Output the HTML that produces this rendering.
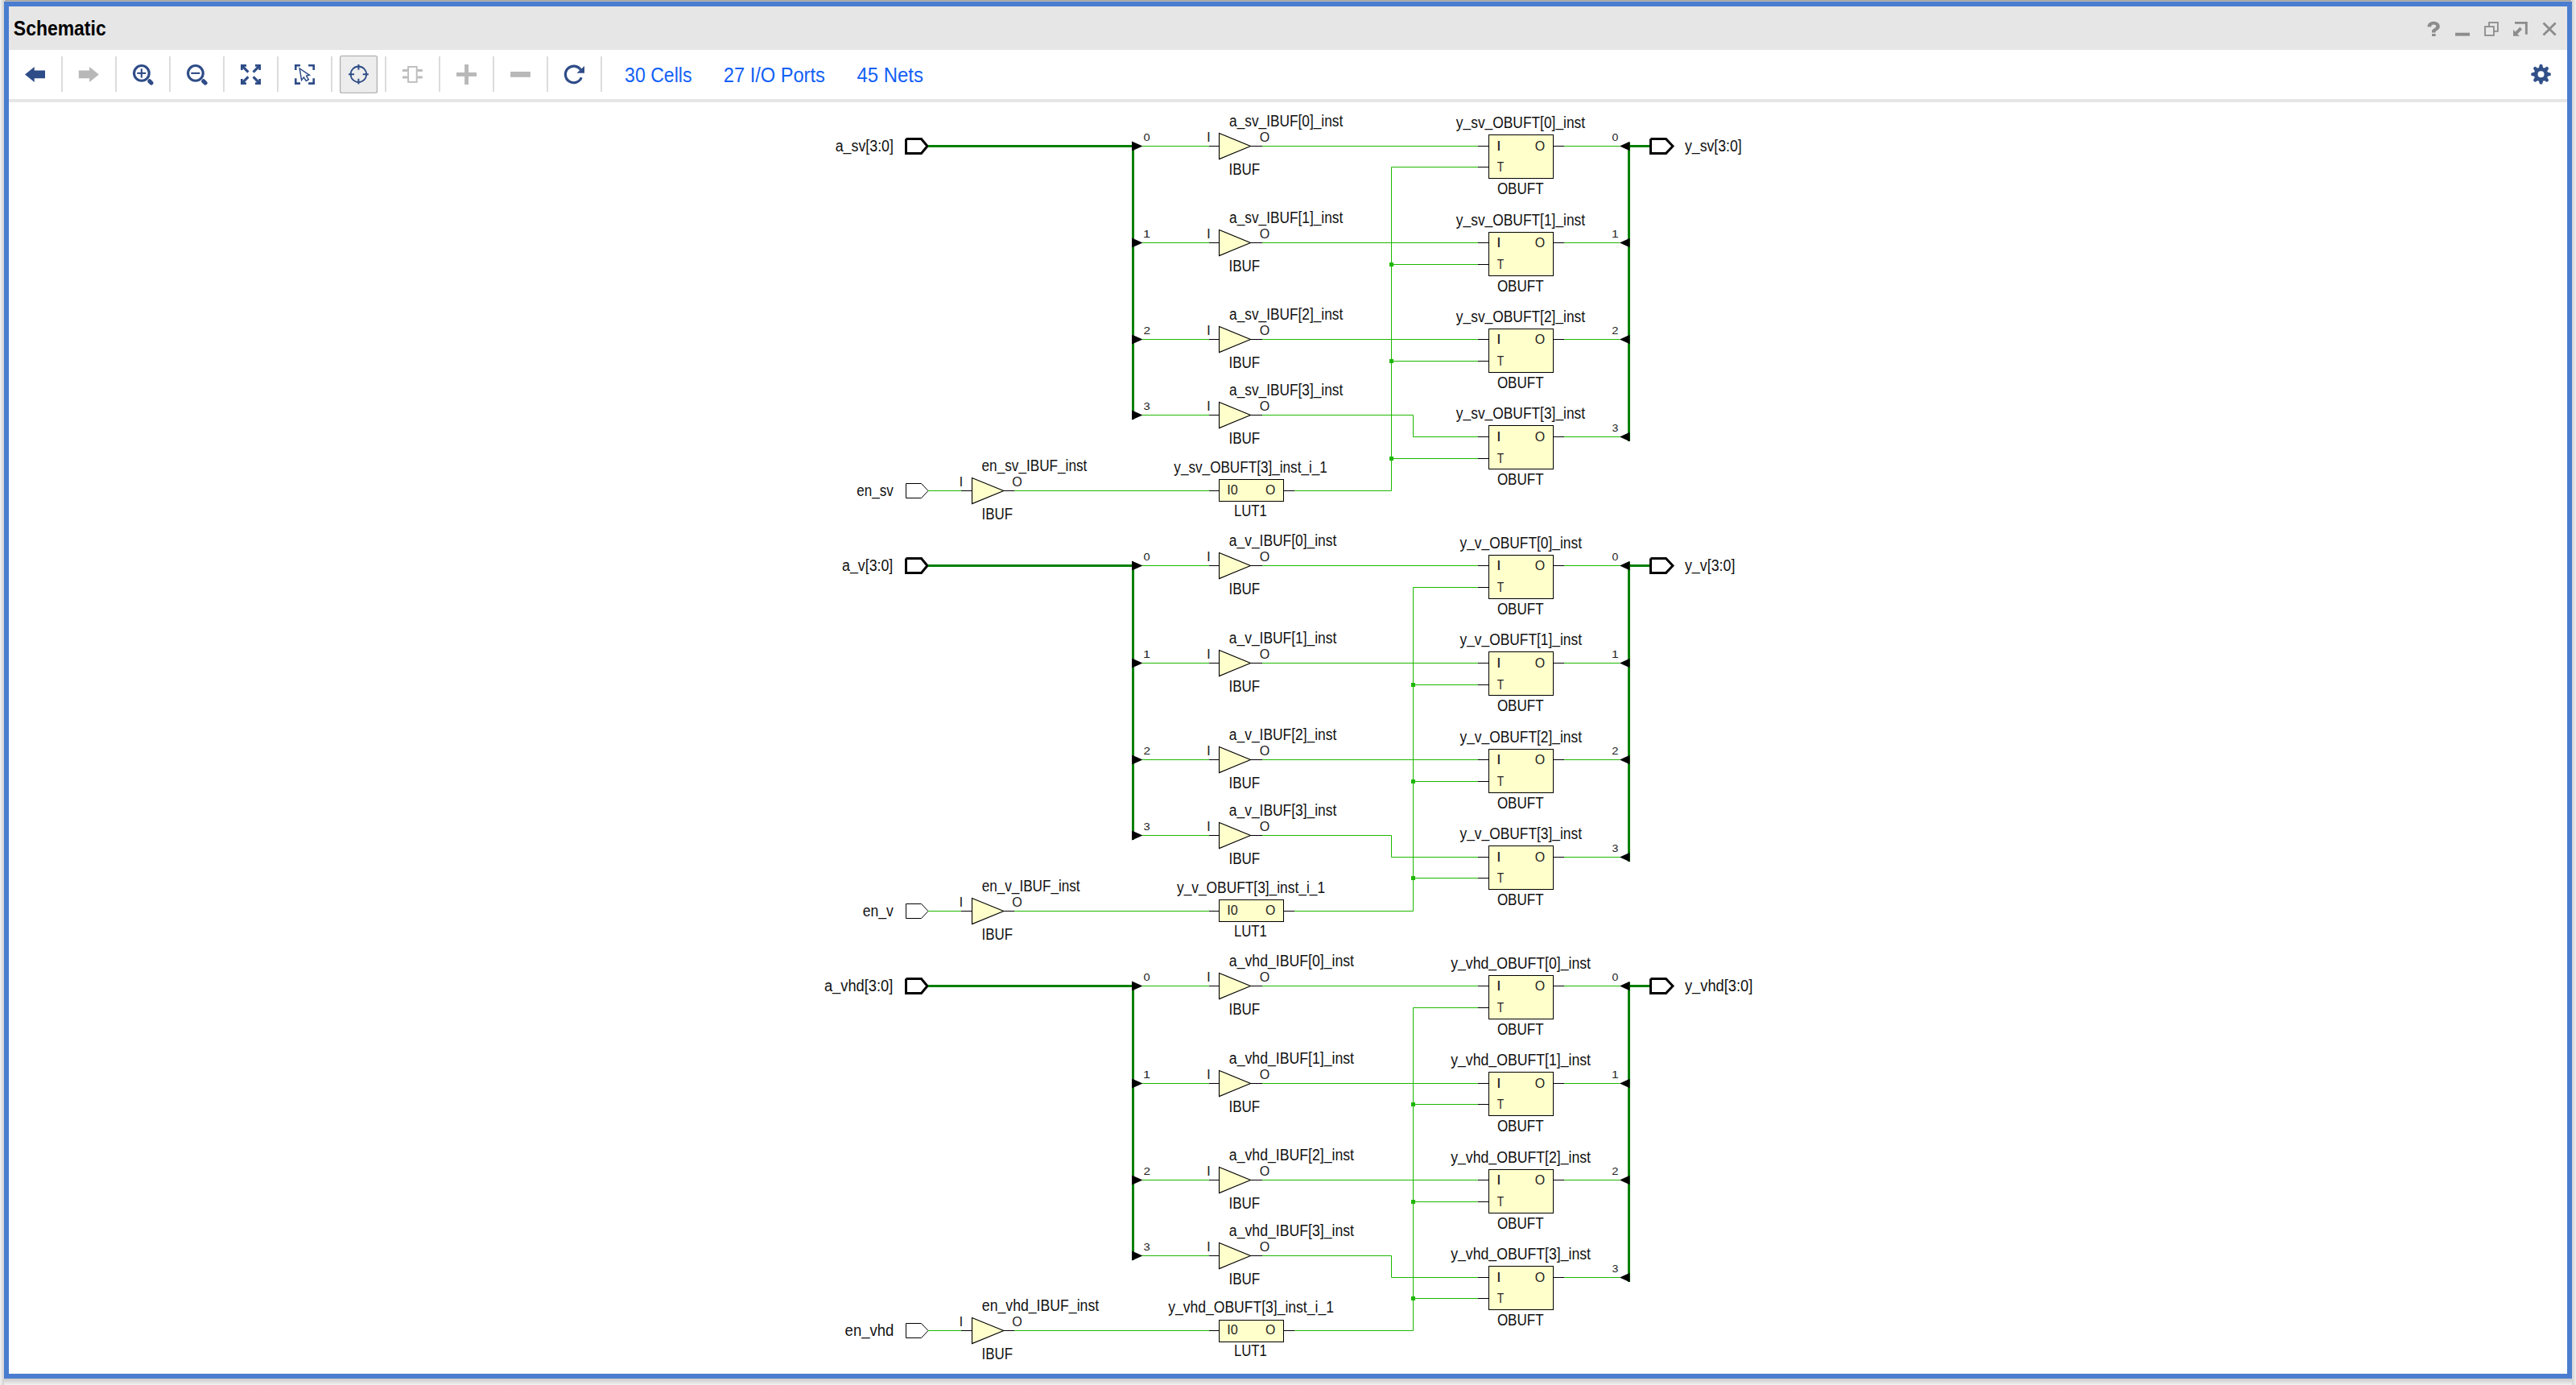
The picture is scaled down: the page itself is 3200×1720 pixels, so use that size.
<!DOCTYPE html><html><head><meta charset="utf-8"><title>Schematic</title><style>html,body{margin:0;padding:0;width:3200px;height:1720px;overflow:hidden;background:#f3f3f3}svg{display:block}text{font-family:"Liberation Sans",sans-serif}</style></head><body>
<svg width="3200" height="1720" viewBox="0 0 3200 1720">
<defs><linearGradient id="shb" x1="0" y1="0" x2="0" y2="1"><stop offset="0" stop-color="#c9c9c9"/><stop offset="1" stop-color="#f3f3f3"/></linearGradient><linearGradient id="shl" x1="1" y1="0" x2="0" y2="0"><stop offset="0" stop-color="#cfcfcf"/><stop offset="1" stop-color="#f3f3f3"/></linearGradient><linearGradient id="shr" x1="0" y1="0" x2="1" y2="0"><stop offset="0" stop-color="#d2d2d2"/><stop offset="1" stop-color="#efefef"/></linearGradient><linearGradient id="sht" x1="0" y1="1" x2="0" y2="0"><stop offset="0" stop-color="#bdbdbd"/><stop offset="1" stop-color="#e9e9e9"/></linearGradient></defs>
<rect x="5" y="1712" width="3192" height="8" fill="url(#shb)"/>
<rect x="0" y="0" width="5" height="1720" fill="url(#shl)"/>
<rect x="3195" y="0" width="5" height="1720" fill="url(#shr)"/>
<rect x="6" y="0" width="3188" height="1" fill="#a3a3a3"/><rect x="5" y="1" width="3190" height="1" fill="#bdbcb7"/>
<rect x="5" y="2" width="3190" height="1710" fill="#4a7dcf"/>
<rect x="11" y="8" width="3178" height="1698" fill="#ffffff"/>
<rect x="11" y="8" width="3178" height="54" fill="#e6e6e6"/>
<rect x="11" y="123" width="3178" height="4" fill="#e6e6e6"/>
<text x="16.84" y="44.20" font-size="26" font-weight="bold" fill="#000" textLength="114.83" lengthAdjust="spacingAndGlyphs">Schematic</text>
<path d="M3015.5,33.2 C3015.5,29 3018.8,26.8 3023,26.8 C3027.6,26.8 3030.8,29.2 3030.8,33 C3030.8,36.6 3027.2,37.6 3025.6,39.2 L3025.6,40.6 L3021,40.6 L3021,38.6 C3021,36 3026.2,35 3026.2,32.8 C3026.2,31.4 3025,30.6 3023.2,30.6 C3021.3,30.6 3020.1,31.6 3020.1,33.4 Z" fill="#8c8c8c"/>
<rect x="3021" y="42" width="4.6" height="3" fill="#8c8c8c"/>
<rect x="3050" y="40.7" width="18" height="3.9" fill="#8c8c8c"/>
<rect x="3092" y="28" width="10.9" height="10.8" fill="none" stroke="#8c8c8c" stroke-width="1.8"/>
<rect x="3087" y="33.1" width="10.9" height="10.8" fill="#e8e8e8" stroke="#8c8c8c" stroke-width="1.8"/>
<path d="M3124,27.1 H3139.8 V42.8 H3136.9 V29.8 H3124 Z" fill="#8c8c8c"/>
<path d="M3122,36.8 L3124.6,39.4 L3130.4,33.6 L3133,36.4 L3127.2,42.2 L3130,44.8 L3122,44.8 Z" fill="#8c8c8c"/>
<path d="M3159.5,28.5 L3174.6,43.6 M3174.6,28.5 L3159.5,43.6" stroke="#8c8c8c" stroke-width="2.8"/>
<rect x="76.15" y="70" width="1.7" height="44" fill="#d6d6d6"/>
<rect x="143.15" y="70" width="1.7" height="44" fill="#d6d6d6"/>
<rect x="210.15" y="70" width="1.7" height="44" fill="#d6d6d6"/>
<rect x="277.15" y="70" width="1.7" height="44" fill="#d6d6d6"/>
<rect x="344.15" y="70" width="1.7" height="44" fill="#d6d6d6"/>
<rect x="411.15" y="70" width="1.7" height="44" fill="#d6d6d6"/>
<rect x="478.15" y="70" width="1.7" height="44" fill="#d6d6d6"/>
<rect x="545.15" y="70" width="1.7" height="44" fill="#d6d6d6"/>
<rect x="612.15" y="70" width="1.7" height="44" fill="#d6d6d6"/>
<rect x="679.15" y="70" width="1.7" height="44" fill="#d6d6d6"/>
<rect x="746.15" y="70" width="1.7" height="44" fill="#d6d6d6"/>
<path d="M31,92.5 L42.7,83 L42.7,87.6 L56,87.6 L56,97.2 L42.7,97.2 L42.7,102 Z" fill="#2e4c87"/>
<path d="M122.8,92.5 L111.1,83 L111.1,87.6 L97.8,87.6 L97.8,97.2 L111.1,97.2 L111.1,102 Z" fill="#b8b8b8"/>
<circle cx="175.9" cy="90.9" r="9.35" fill="none" stroke="#2e4c87" stroke-width="3.1"/>
<line x1="185.80" y1="100.8" x2="188.00" y2="103.0" stroke="#2e4c87" stroke-width="5.2" stroke-linecap="round"/>
<line x1="170.30" y1="90.9" x2="181.30" y2="90.9" stroke="#2e4c87" stroke-width="2.1"/>
<line x1="175.80" y1="85.3" x2="175.80" y2="96.5" stroke="#2e4c87" stroke-width="2.1"/>
<circle cx="242.9" cy="90.9" r="9.35" fill="none" stroke="#2e4c87" stroke-width="3.1"/>
<line x1="252.80" y1="100.8" x2="255.00" y2="103.0" stroke="#2e4c87" stroke-width="5.2" stroke-linecap="round"/>
<line x1="237.30" y1="90.9" x2="248.30" y2="90.9" stroke="#2e4c87" stroke-width="2.1"/>
<g transform=""><path d="M299,80 L306,80 L306,82.7 L301.7,82.7 L301.7,87 L299,87 Z" fill="#2e4c87"/><line x1="300.6" y1="81.6" x2="308.4" y2="89.6" stroke="#2e4c87" stroke-width="3.1"/></g>
<g transform="translate(623,0) scale(-1,1)"><path d="M299,80 L306,80 L306,82.7 L301.7,82.7 L301.7,87 L299,87 Z" fill="#2e4c87"/><line x1="300.6" y1="81.6" x2="308.4" y2="89.6" stroke="#2e4c87" stroke-width="3.1"/></g>
<g transform="translate(0,185) scale(1,-1)"><path d="M299,80 L306,80 L306,82.7 L301.7,82.7 L301.7,87 L299,87 Z" fill="#2e4c87"/><line x1="300.6" y1="81.6" x2="308.4" y2="89.6" stroke="#2e4c87" stroke-width="3.1"/></g>
<g transform="translate(623,185) scale(-1,-1)"><path d="M299,80 L306,80 L306,82.7 L301.7,82.7 L301.7,87 L299,87 Z" fill="#2e4c87"/><line x1="300.6" y1="81.6" x2="308.4" y2="89.6" stroke="#2e4c87" stroke-width="3.1"/></g>
<path d="M367.3,87 V81.3 H373 M383.1,81.3 H389.7 V87 M367.3,97.2 V103.6 H373 M383.1,103.6 H389.7 V97.2" fill="none" stroke="#2e4c87" stroke-width="2.6"/>
<path d="M372.2,85 L384.4,93.3 L380.6,94.3 L383.3,98.7 L380.3,100.5 L377.4,96 L374.6,99.4 Z" fill="none" stroke="#2e4c87" stroke-width="1.5" stroke-linejoin="miter"/>
<rect x="422.6" y="69.5" width="45.8" height="45.7" rx="2" fill="#ededed" stroke="#a6a6a6" stroke-width="1.1"/>
<circle cx="445.4" cy="92.3" r="9.8" fill="none" stroke="#2e4c87" stroke-width="1.8"/>
<path d="M433,92.3 H440 M450.7,92.3 H457.8 M445.4,80.1 V86.7 M445.4,97.8 V104.6" stroke="#2e4c87" stroke-width="2"/>
<rect x="507.1" y="82.9" width="10.6" height="19" fill="none" stroke="#bdbdbd" stroke-width="1.9"/>
<path d="M500,87.5 H506.5 M500,96.1 H506.5 M518.4,87.5 H524.8 M518.4,96.1 H524.8" stroke="#bdbdbd" stroke-width="3"/>
<rect x="567" y="90" width="25" height="4.9" fill="#b8b8b8"/><rect x="577.1" y="80" width="4.9" height="25" fill="#b8b8b8"/>
<rect x="634.1" y="89" width="24.8" height="6.8" fill="#b8b8b8"/>
<path d="M721.24,86.64 A10.3,10.3 0 1 0 722.25,96.26" fill="none" stroke="#2e4c87" stroke-width="3.2"/>
<path d="M726,82 L726,90.7 L716.5,90.7 Z" fill="#2e4c87"/>
<text x="776.12" y="102.10" font-size="25" fill="#1160f5" textLength="83.31" lengthAdjust="spacingAndGlyphs">30 Cells</text>
<text x="898.81" y="102.10" font-size="25" fill="#1160f5" textLength="126.04" lengthAdjust="spacingAndGlyphs">27 I/O Ports</text>
<text x="1064.45" y="102.10" font-size="25" fill="#1160f5" textLength="82.41" lengthAdjust="spacingAndGlyphs">45 Nets</text>
<path d="M3153.25,84.45 L3153.94,83.67 L3155.00,80.09 L3158.00,80.09 L3159.06,83.67 L3159.75,84.45 L3160.79,84.39 L3164.07,82.61 L3166.19,84.73 L3164.41,88.01 L3164.35,89.05 L3165.13,89.74 L3168.71,90.80 L3168.71,93.80 L3165.13,94.86 L3164.35,95.55 L3164.41,96.59 L3166.19,99.87 L3164.07,101.99 L3160.79,100.21 L3159.75,100.15 L3159.06,100.93 L3158.00,104.51 L3155.00,104.51 L3153.94,100.93 L3153.25,100.15 L3152.21,100.21 L3148.93,101.99 L3146.81,99.87 L3148.59,96.59 L3148.65,95.55 L3147.87,94.86 L3144.29,93.80 L3144.29,90.80 L3147.87,89.74 L3148.65,89.05 L3148.59,88.01 L3146.81,84.73 L3148.93,82.61 L3152.21,84.39 Z M3160.50,92.3 A4,4 0 1 0 3152.50,92.3 A4,4 0 1 0 3160.50,92.3 Z" fill="#325088" fill-rule="evenodd"/>
<polyline points="1125.5,172.50 1144.5,172.50 1152,181.50 1144.5,190.50 1125.5,190.50 1125.5,172.50" fill="#fff" stroke="#000" stroke-width="3" stroke-linejoin="miter"/>
<rect x="1153" y="180.00" width="255" height="3" fill="#008000"/>
<rect x="1406" y="180.00" width="3" height="341.00" fill="#008000"/>
<polyline points="2050.5,172.50 2069.5,172.50 2078,181.50 2069.5,190.50 2050.5,190.50 2050.5,172.50" fill="#fff" stroke="#000" stroke-width="3" stroke-linejoin="miter"/>
<rect x="2022" y="180.00" width="27" height="3" fill="#008000"/>
<rect x="2022" y="177.00" width="3" height="371.00" fill="#008000"/>
<polygon points="1406.00,175.50 1419.50,181.50 1406.00,187.50" fill="#000" stroke="none" stroke-width="1"/>
<rect x="1419.00" y="181.00" width="83.00" height="1" fill="#1cb800"/>
<rect x="1502.00" y="181.00" width="12.00" height="1" fill="#000"/>
<polygon points="1514.50,165.40 1553.50,181.50 1514.50,197.60" fill="#ffffcc" stroke="#000" stroke-width="1.1" stroke-linejoin="miter"/>
<rect x="1554.00" y="181.00" width="14.00" height="1" fill="#000"/>
<text x="1420.63" y="175.30" font-size="13" fill="#222" textLength="8.14" lengthAdjust="spacingAndGlyphs">0</text>
<text x="1499.02" y="176.10" font-size="16" fill="#222" textLength="4.77" lengthAdjust="spacingAndGlyphs">I</text>
<text x="1564.74" y="176.10" font-size="16" fill="#222" textLength="12.53" lengthAdjust="spacingAndGlyphs">O</text>
<text x="1527.07" y="157.10" font-size="19.5" fill="#111" textLength="141.16" lengthAdjust="spacingAndGlyphs">a<tspan dy="-1.2">_</tspan><tspan dy="1.2">sv</tspan><tspan dy="-1.2">_</tspan><tspan dy="1.2">IBUF[0]</tspan><tspan dy="-1.2">_</tspan><tspan dy="1.2">inst</tspan></text>
<text x="1526.43" y="217.30" font-size="19.5" fill="#111" textLength="38.75" lengthAdjust="spacingAndGlyphs">IBUF</text>
<polygon points="1406.00,295.50 1419.50,301.50 1406.00,307.50" fill="#000" stroke="none" stroke-width="1"/>
<rect x="1419.00" y="301.00" width="83.00" height="1" fill="#1cb800"/>
<rect x="1502.00" y="301.00" width="12.00" height="1" fill="#000"/>
<polygon points="1514.50,285.40 1553.50,301.50 1514.50,317.60" fill="#ffffcc" stroke="#000" stroke-width="1.1" stroke-linejoin="miter"/>
<rect x="1554.00" y="301.00" width="14.00" height="1" fill="#000"/>
<text x="1419.96" y="295.30" font-size="13" fill="#222" textLength="9.03" lengthAdjust="spacingAndGlyphs">1</text>
<text x="1499.02" y="296.10" font-size="16" fill="#222" textLength="4.77" lengthAdjust="spacingAndGlyphs">I</text>
<text x="1564.74" y="296.10" font-size="16" fill="#222" textLength="12.53" lengthAdjust="spacingAndGlyphs">O</text>
<text x="1527.07" y="277.10" font-size="19.5" fill="#111" textLength="141.16" lengthAdjust="spacingAndGlyphs">a<tspan dy="-1.2">_</tspan><tspan dy="1.2">sv</tspan><tspan dy="-1.2">_</tspan><tspan dy="1.2">IBUF[1]</tspan><tspan dy="-1.2">_</tspan><tspan dy="1.2">inst</tspan></text>
<text x="1526.43" y="337.30" font-size="19.5" fill="#111" textLength="38.75" lengthAdjust="spacingAndGlyphs">IBUF</text>
<polygon points="1406.00,415.50 1419.50,421.50 1406.00,427.50" fill="#000" stroke="none" stroke-width="1"/>
<rect x="1419.00" y="421.00" width="83.00" height="1" fill="#1cb800"/>
<rect x="1502.00" y="421.00" width="12.00" height="1" fill="#000"/>
<polygon points="1514.50,405.40 1553.50,421.50 1514.50,437.60" fill="#ffffcc" stroke="#000" stroke-width="1.1" stroke-linejoin="miter"/>
<rect x="1554.00" y="421.00" width="14.00" height="1" fill="#000"/>
<text x="1420.43" y="415.30" font-size="13" fill="#222" textLength="8.55" lengthAdjust="spacingAndGlyphs">2</text>
<text x="1499.02" y="416.10" font-size="16" fill="#222" textLength="4.77" lengthAdjust="spacingAndGlyphs">I</text>
<text x="1564.74" y="416.10" font-size="16" fill="#222" textLength="12.53" lengthAdjust="spacingAndGlyphs">O</text>
<text x="1527.07" y="397.10" font-size="19.5" fill="#111" textLength="141.16" lengthAdjust="spacingAndGlyphs">a<tspan dy="-1.2">_</tspan><tspan dy="1.2">sv</tspan><tspan dy="-1.2">_</tspan><tspan dy="1.2">IBUF[2]</tspan><tspan dy="-1.2">_</tspan><tspan dy="1.2">inst</tspan></text>
<text x="1526.43" y="457.30" font-size="19.5" fill="#111" textLength="38.75" lengthAdjust="spacingAndGlyphs">IBUF</text>
<polygon points="1406.00,509.50 1419.50,515.50 1406.00,521.50" fill="#000" stroke="none" stroke-width="1"/>
<rect x="1419.00" y="515.00" width="83.00" height="1" fill="#1cb800"/>
<rect x="1502.00" y="515.00" width="12.00" height="1" fill="#000"/>
<polygon points="1514.50,499.40 1553.50,515.50 1514.50,531.60" fill="#ffffcc" stroke="#000" stroke-width="1.1" stroke-linejoin="miter"/>
<rect x="1554.00" y="515.00" width="14.00" height="1" fill="#000"/>
<text x="1420.64" y="509.30" font-size="13" fill="#222" textLength="8.21" lengthAdjust="spacingAndGlyphs">3</text>
<text x="1499.02" y="510.10" font-size="16" fill="#222" textLength="4.77" lengthAdjust="spacingAndGlyphs">I</text>
<text x="1564.74" y="510.10" font-size="16" fill="#222" textLength="12.53" lengthAdjust="spacingAndGlyphs">O</text>
<text x="1527.07" y="491.10" font-size="19.5" fill="#111" textLength="141.16" lengthAdjust="spacingAndGlyphs">a<tspan dy="-1.2">_</tspan><tspan dy="1.2">sv</tspan><tspan dy="-1.2">_</tspan><tspan dy="1.2">IBUF[3]</tspan><tspan dy="-1.2">_</tspan><tspan dy="1.2">inst</tspan></text>
<text x="1526.43" y="551.30" font-size="19.5" fill="#111" textLength="38.75" lengthAdjust="spacingAndGlyphs">IBUF</text>
<rect x="1568.00" y="181.00" width="268.00" height="1" fill="#1cb800"/>
<rect x="1568.00" y="301.00" width="268.00" height="1" fill="#1cb800"/>
<rect x="1568.00" y="421.00" width="268.00" height="1" fill="#1cb800"/>
<polyline points="1568,515.50 1755.5,515.50 1755.5,542.50 1836,542.50" fill="none" stroke="#1cb800" stroke-width="1"/>
<rect x="1728.50" y="207.00" width="107.50" height="1" fill="#1cb800"/>
<rect x="1836.00" y="181.00" width="13.00" height="1" fill="#000"/>
<rect x="1836.00" y="207.00" width="13.00" height="1" fill="#000"/>
<rect x="1849.5" y="167.50" width="80" height="54" fill="#ffffcc" stroke="#000" stroke-width="1"/>
<rect x="1930.00" y="181.00" width="13.00" height="1" fill="#000"/>
<rect x="1943.00" y="181.00" width="69.50" height="1" fill="#1cb800"/>
<polygon points="2024.50,175.70 2012.00,181.50 2024.50,187.30" fill="#000" stroke="none" stroke-width="1"/>
<text x="2002.55" y="175.30" font-size="13" fill="#222" textLength="7.79" lengthAdjust="spacingAndGlyphs">0</text>
<text x="1859.12" y="186.50" font-size="16" fill="#222" textLength="5.66" lengthAdjust="spacingAndGlyphs">I</text>
<text x="1906.74" y="186.50" font-size="16" fill="#222" textLength="12.42" lengthAdjust="spacingAndGlyphs">O</text>
<text x="1859.69" y="212.70" font-size="16" fill="#222" textLength="8.43" lengthAdjust="spacingAndGlyphs">T</text>
<text x="1859.89" y="240.50" font-size="19.5" fill="#111" textLength="57.70" lengthAdjust="spacingAndGlyphs">OBUFT</text>
<text x="1808.86" y="158.50" font-size="19.5" fill="#111" textLength="160.27" lengthAdjust="spacingAndGlyphs">y<tspan dy="-1.2">_</tspan><tspan dy="1.2">sv</tspan><tspan dy="-1.2">_</tspan><tspan dy="1.2">OBUFT[0]</tspan><tspan dy="-1.2">_</tspan><tspan dy="1.2">inst</tspan></text>
<rect x="1728.50" y="328.00" width="107.50" height="1" fill="#1cb800"/>
<rect x="1836.00" y="301.00" width="13.00" height="1" fill="#000"/>
<rect x="1836.00" y="328.00" width="13.00" height="1" fill="#000"/>
<rect x="1849.5" y="288.50" width="80" height="54" fill="#ffffcc" stroke="#000" stroke-width="1"/>
<rect x="1930.00" y="301.00" width="13.00" height="1" fill="#000"/>
<rect x="1943.00" y="301.00" width="69.50" height="1" fill="#1cb800"/>
<polygon points="2024.50,295.70 2012.00,301.50 2024.50,307.30" fill="#000" stroke="none" stroke-width="1"/>
<text x="2001.92" y="295.30" font-size="13" fill="#222" textLength="8.64" lengthAdjust="spacingAndGlyphs">1</text>
<text x="1859.12" y="306.50" font-size="16" fill="#222" textLength="5.66" lengthAdjust="spacingAndGlyphs">I</text>
<text x="1906.74" y="306.50" font-size="16" fill="#222" textLength="12.42" lengthAdjust="spacingAndGlyphs">O</text>
<text x="1859.69" y="333.70" font-size="16" fill="#222" textLength="8.43" lengthAdjust="spacingAndGlyphs">T</text>
<text x="1859.89" y="361.50" font-size="19.5" fill="#111" textLength="57.70" lengthAdjust="spacingAndGlyphs">OBUFT</text>
<text x="1808.86" y="279.50" font-size="19.5" fill="#111" textLength="160.27" lengthAdjust="spacingAndGlyphs">y<tspan dy="-1.2">_</tspan><tspan dy="1.2">sv</tspan><tspan dy="-1.2">_</tspan><tspan dy="1.2">OBUFT[1]</tspan><tspan dy="-1.2">_</tspan><tspan dy="1.2">inst</tspan></text>
<rect x="1726.00" y="326.00" width="5" height="5" fill="#1cb800"/>
<rect x="1728.50" y="448.00" width="107.50" height="1" fill="#1cb800"/>
<rect x="1836.00" y="421.00" width="13.00" height="1" fill="#000"/>
<rect x="1836.00" y="448.00" width="13.00" height="1" fill="#000"/>
<rect x="1849.5" y="408.50" width="80" height="54" fill="#ffffcc" stroke="#000" stroke-width="1"/>
<rect x="1930.00" y="421.00" width="13.00" height="1" fill="#000"/>
<rect x="1943.00" y="421.00" width="69.50" height="1" fill="#1cb800"/>
<polygon points="2024.50,415.70 2012.00,421.50 2024.50,427.30" fill="#000" stroke="none" stroke-width="1"/>
<text x="2002.36" y="415.30" font-size="13" fill="#222" textLength="8.18" lengthAdjust="spacingAndGlyphs">2</text>
<text x="1859.12" y="426.50" font-size="16" fill="#222" textLength="5.66" lengthAdjust="spacingAndGlyphs">I</text>
<text x="1906.74" y="426.50" font-size="16" fill="#222" textLength="12.42" lengthAdjust="spacingAndGlyphs">O</text>
<text x="1859.69" y="453.70" font-size="16" fill="#222" textLength="8.43" lengthAdjust="spacingAndGlyphs">T</text>
<text x="1859.89" y="481.50" font-size="19.5" fill="#111" textLength="57.70" lengthAdjust="spacingAndGlyphs">OBUFT</text>
<text x="1808.86" y="399.50" font-size="19.5" fill="#111" textLength="160.27" lengthAdjust="spacingAndGlyphs">y<tspan dy="-1.2">_</tspan><tspan dy="1.2">sv</tspan><tspan dy="-1.2">_</tspan><tspan dy="1.2">OBUFT[2]</tspan><tspan dy="-1.2">_</tspan><tspan dy="1.2">inst</tspan></text>
<rect x="1726.00" y="446.00" width="5" height="5" fill="#1cb800"/>
<rect x="1728.50" y="569.00" width="107.50" height="1" fill="#1cb800"/>
<rect x="1836.00" y="542.00" width="13.00" height="1" fill="#000"/>
<rect x="1836.00" y="569.00" width="13.00" height="1" fill="#000"/>
<rect x="1849.5" y="528.50" width="80" height="54" fill="#ffffcc" stroke="#000" stroke-width="1"/>
<rect x="1930.00" y="542.00" width="13.00" height="1" fill="#000"/>
<rect x="1943.00" y="542.00" width="69.50" height="1" fill="#1cb800"/>
<polygon points="2024.50,536.70 2012.00,542.50 2024.50,548.30" fill="#000" stroke="none" stroke-width="1"/>
<text x="2002.56" y="536.30" font-size="13" fill="#222" textLength="7.86" lengthAdjust="spacingAndGlyphs">3</text>
<text x="1859.12" y="547.50" font-size="16" fill="#222" textLength="5.66" lengthAdjust="spacingAndGlyphs">I</text>
<text x="1906.74" y="547.50" font-size="16" fill="#222" textLength="12.42" lengthAdjust="spacingAndGlyphs">O</text>
<text x="1859.69" y="574.70" font-size="16" fill="#222" textLength="8.43" lengthAdjust="spacingAndGlyphs">T</text>
<text x="1859.89" y="601.50" font-size="19.5" fill="#111" textLength="57.70" lengthAdjust="spacingAndGlyphs">OBUFT</text>
<text x="1808.86" y="519.50" font-size="19.5" fill="#111" textLength="160.27" lengthAdjust="spacingAndGlyphs">y<tspan dy="-1.2">_</tspan><tspan dy="1.2">sv</tspan><tspan dy="-1.2">_</tspan><tspan dy="1.2">OBUFT[3]</tspan><tspan dy="-1.2">_</tspan><tspan dy="1.2">inst</tspan></text>
<rect x="1726.00" y="567.00" width="5" height="5" fill="#1cb800"/>
<polyline points="1608,609.50 1728.5,609.50 1728.5,207.50" fill="none" stroke="#1cb800" stroke-width="1"/>
<polyline points="1125.5,600.50 1144.5,600.50 1153,609.50 1144.5,618.50 1125.5,618.50 1125.5,600.50" fill="#fff" stroke="#000" stroke-width="1" stroke-linejoin="miter"/>
<rect x="1153.00" y="609.00" width="41.00" height="1" fill="#1cb800"/>
<rect x="1194.00" y="609.00" width="13.00" height="1" fill="#000"/>
<polygon points="1207.50,593.40 1246.80,609.50 1207.50,625.60" fill="#ffffcc" stroke="#000" stroke-width="1.1" stroke-linejoin="miter"/>
<rect x="1247.00" y="609.00" width="13.00" height="1" fill="#000"/>
<rect x="1260.00" y="609.00" width="242.00" height="1" fill="#1cb800"/>
<rect x="1502.00" y="609.00" width="12.00" height="1" fill="#000"/>
<rect x="1514.5" y="595.50" width="80" height="27" fill="#ffffcc" stroke="#000" stroke-width="1"/>
<rect x="1595.00" y="609.00" width="13.00" height="1" fill="#000"/>
<text x="1191.62" y="604.20" font-size="16" fill="#222" textLength="4.77" lengthAdjust="spacingAndGlyphs">I</text>
<text x="1257.24" y="604.20" font-size="16" fill="#222" textLength="12.53" lengthAdjust="spacingAndGlyphs">O</text>
<text x="1219.44" y="645.00" font-size="19.5" fill="#111" textLength="38.54" lengthAdjust="spacingAndGlyphs">IBUF</text>
<text x="1219.57" y="585.40" font-size="19.5" fill="#111" textLength="130.76" lengthAdjust="spacingAndGlyphs">en<tspan dy="-1.2">_</tspan><tspan dy="1.2">sv</tspan><tspan dy="-1.2">_</tspan><tspan dy="1.2">IBUF</tspan><tspan dy="-1.2">_</tspan><tspan dy="1.2">inst</tspan></text>
<text x="1524.22" y="614.30" font-size="16" fill="#222" textLength="13.41" lengthAdjust="spacingAndGlyphs">I0</text>
<text x="1571.95" y="614.30" font-size="16" fill="#222" textLength="12.31" lengthAdjust="spacingAndGlyphs">O</text>
<text x="1533.03" y="640.90" font-size="19.5" fill="#111" textLength="40.78" lengthAdjust="spacingAndGlyphs">LUT1</text>
<text x="1458.36" y="586.90" font-size="19.5" fill="#111" textLength="190.48" lengthAdjust="spacingAndGlyphs">y<tspan dy="-1.2">_</tspan><tspan dy="1.2">sv</tspan><tspan dy="-1.2">_</tspan><tspan dy="1.2">OBUFT[3]</tspan><tspan dy="-1.2">_</tspan><tspan dy="1.2">inst</tspan><tspan dy="-1.2">_</tspan><tspan dy="1.2">i</tspan><tspan dy="-1.2">_</tspan><tspan dy="1.2">1</tspan></text>
<text x="1037.64" y="188.30" font-size="19.5" fill="#111" textLength="72.33" lengthAdjust="spacingAndGlyphs">a<tspan dy="-1.2">_</tspan><tspan dy="1.2">sv[3:0]</tspan></text>
<text x="1064.18" y="616.00" font-size="19.5" fill="#111" textLength="45.48" lengthAdjust="spacingAndGlyphs">en<tspan dy="-1.2">_</tspan><tspan dy="1.2">sv</tspan></text>
<text x="2092.96" y="188.10" font-size="19.5" fill="#111" textLength="70.80" lengthAdjust="spacingAndGlyphs">y<tspan dy="-1.2">_</tspan><tspan dy="1.2">sv[3:0]</tspan></text>
<polyline points="1125.5,693.50 1144.5,693.50 1152,702.50 1144.5,711.50 1125.5,711.50 1125.5,693.50" fill="#fff" stroke="#000" stroke-width="3" stroke-linejoin="miter"/>
<rect x="1153" y="701.00" width="255" height="3" fill="#008000"/>
<rect x="1406" y="701.00" width="3" height="342.00" fill="#008000"/>
<polyline points="2050.5,693.50 2069.5,693.50 2078,702.50 2069.5,711.50 2050.5,711.50 2050.5,693.50" fill="#fff" stroke="#000" stroke-width="3" stroke-linejoin="miter"/>
<rect x="2022" y="701.00" width="27" height="3" fill="#008000"/>
<rect x="2022" y="698.00" width="3" height="372.00" fill="#008000"/>
<polygon points="1406.00,696.50 1419.50,702.50 1406.00,708.50" fill="#000" stroke="none" stroke-width="1"/>
<rect x="1419.00" y="702.00" width="83.00" height="1" fill="#1cb800"/>
<rect x="1502.00" y="702.00" width="12.00" height="1" fill="#000"/>
<polygon points="1514.50,686.40 1553.50,702.50 1514.50,718.60" fill="#ffffcc" stroke="#000" stroke-width="1.1" stroke-linejoin="miter"/>
<rect x="1554.00" y="702.00" width="14.00" height="1" fill="#000"/>
<text x="1420.63" y="696.30" font-size="13" fill="#222" textLength="8.14" lengthAdjust="spacingAndGlyphs">0</text>
<text x="1499.02" y="697.10" font-size="16" fill="#222" textLength="4.77" lengthAdjust="spacingAndGlyphs">I</text>
<text x="1564.74" y="697.10" font-size="16" fill="#222" textLength="12.53" lengthAdjust="spacingAndGlyphs">O</text>
<text x="1526.86" y="678.10" font-size="19.5" fill="#111" textLength="133.37" lengthAdjust="spacingAndGlyphs">a<tspan dy="-1.2">_</tspan><tspan dy="1.2">v</tspan><tspan dy="-1.2">_</tspan><tspan dy="1.2">IBUF[0]</tspan><tspan dy="-1.2">_</tspan><tspan dy="1.2">inst</tspan></text>
<text x="1526.43" y="738.30" font-size="19.5" fill="#111" textLength="38.75" lengthAdjust="spacingAndGlyphs">IBUF</text>
<polygon points="1406.00,817.50 1419.50,823.50 1406.00,829.50" fill="#000" stroke="none" stroke-width="1"/>
<rect x="1419.00" y="823.00" width="83.00" height="1" fill="#1cb800"/>
<rect x="1502.00" y="823.00" width="12.00" height="1" fill="#000"/>
<polygon points="1514.50,807.40 1553.50,823.50 1514.50,839.60" fill="#ffffcc" stroke="#000" stroke-width="1.1" stroke-linejoin="miter"/>
<rect x="1554.00" y="823.00" width="14.00" height="1" fill="#000"/>
<text x="1419.96" y="817.30" font-size="13" fill="#222" textLength="9.03" lengthAdjust="spacingAndGlyphs">1</text>
<text x="1499.02" y="818.10" font-size="16" fill="#222" textLength="4.77" lengthAdjust="spacingAndGlyphs">I</text>
<text x="1564.74" y="818.10" font-size="16" fill="#222" textLength="12.53" lengthAdjust="spacingAndGlyphs">O</text>
<text x="1526.86" y="799.10" font-size="19.5" fill="#111" textLength="133.37" lengthAdjust="spacingAndGlyphs">a<tspan dy="-1.2">_</tspan><tspan dy="1.2">v</tspan><tspan dy="-1.2">_</tspan><tspan dy="1.2">IBUF[1]</tspan><tspan dy="-1.2">_</tspan><tspan dy="1.2">inst</tspan></text>
<text x="1526.43" y="859.30" font-size="19.5" fill="#111" textLength="38.75" lengthAdjust="spacingAndGlyphs">IBUF</text>
<polygon points="1406.00,937.50 1419.50,943.50 1406.00,949.50" fill="#000" stroke="none" stroke-width="1"/>
<rect x="1419.00" y="943.00" width="83.00" height="1" fill="#1cb800"/>
<rect x="1502.00" y="943.00" width="12.00" height="1" fill="#000"/>
<polygon points="1514.50,927.40 1553.50,943.50 1514.50,959.60" fill="#ffffcc" stroke="#000" stroke-width="1.1" stroke-linejoin="miter"/>
<rect x="1554.00" y="943.00" width="14.00" height="1" fill="#000"/>
<text x="1420.43" y="937.30" font-size="13" fill="#222" textLength="8.55" lengthAdjust="spacingAndGlyphs">2</text>
<text x="1499.02" y="938.10" font-size="16" fill="#222" textLength="4.77" lengthAdjust="spacingAndGlyphs">I</text>
<text x="1564.74" y="938.10" font-size="16" fill="#222" textLength="12.53" lengthAdjust="spacingAndGlyphs">O</text>
<text x="1526.86" y="919.10" font-size="19.5" fill="#111" textLength="133.37" lengthAdjust="spacingAndGlyphs">a<tspan dy="-1.2">_</tspan><tspan dy="1.2">v</tspan><tspan dy="-1.2">_</tspan><tspan dy="1.2">IBUF[2]</tspan><tspan dy="-1.2">_</tspan><tspan dy="1.2">inst</tspan></text>
<text x="1526.43" y="979.30" font-size="19.5" fill="#111" textLength="38.75" lengthAdjust="spacingAndGlyphs">IBUF</text>
<polygon points="1406.00,1031.50 1419.50,1037.50 1406.00,1043.50" fill="#000" stroke="none" stroke-width="1"/>
<rect x="1419.00" y="1037.00" width="83.00" height="1" fill="#1cb800"/>
<rect x="1502.00" y="1037.00" width="12.00" height="1" fill="#000"/>
<polygon points="1514.50,1021.40 1553.50,1037.50 1514.50,1053.60" fill="#ffffcc" stroke="#000" stroke-width="1.1" stroke-linejoin="miter"/>
<rect x="1554.00" y="1037.00" width="14.00" height="1" fill="#000"/>
<text x="1420.64" y="1031.30" font-size="13" fill="#222" textLength="8.21" lengthAdjust="spacingAndGlyphs">3</text>
<text x="1499.02" y="1032.10" font-size="16" fill="#222" textLength="4.77" lengthAdjust="spacingAndGlyphs">I</text>
<text x="1564.74" y="1032.10" font-size="16" fill="#222" textLength="12.53" lengthAdjust="spacingAndGlyphs">O</text>
<text x="1526.86" y="1013.10" font-size="19.5" fill="#111" textLength="133.37" lengthAdjust="spacingAndGlyphs">a<tspan dy="-1.2">_</tspan><tspan dy="1.2">v</tspan><tspan dy="-1.2">_</tspan><tspan dy="1.2">IBUF[3]</tspan><tspan dy="-1.2">_</tspan><tspan dy="1.2">inst</tspan></text>
<text x="1526.43" y="1073.30" font-size="19.5" fill="#111" textLength="38.75" lengthAdjust="spacingAndGlyphs">IBUF</text>
<rect x="1568.00" y="702.00" width="268.00" height="1" fill="#1cb800"/>
<rect x="1568.00" y="823.00" width="268.00" height="1" fill="#1cb800"/>
<rect x="1568.00" y="943.00" width="268.00" height="1" fill="#1cb800"/>
<polyline points="1568,1037.50 1728.5,1037.50 1728.5,1064.50 1836,1064.50" fill="none" stroke="#1cb800" stroke-width="1"/>
<rect x="1755.50" y="729.00" width="80.50" height="1" fill="#1cb800"/>
<rect x="1836.00" y="702.00" width="13.00" height="1" fill="#000"/>
<rect x="1836.00" y="729.00" width="13.00" height="1" fill="#000"/>
<rect x="1849.5" y="689.50" width="80" height="54" fill="#ffffcc" stroke="#000" stroke-width="1"/>
<rect x="1930.00" y="702.00" width="13.00" height="1" fill="#000"/>
<rect x="1943.00" y="702.00" width="69.50" height="1" fill="#1cb800"/>
<polygon points="2024.50,696.70 2012.00,702.50 2024.50,708.30" fill="#000" stroke="none" stroke-width="1"/>
<text x="2002.55" y="696.30" font-size="13" fill="#222" textLength="7.79" lengthAdjust="spacingAndGlyphs">0</text>
<text x="1859.12" y="707.50" font-size="16" fill="#222" textLength="5.66" lengthAdjust="spacingAndGlyphs">I</text>
<text x="1906.74" y="707.50" font-size="16" fill="#222" textLength="12.42" lengthAdjust="spacingAndGlyphs">O</text>
<text x="1859.69" y="734.70" font-size="16" fill="#222" textLength="8.43" lengthAdjust="spacingAndGlyphs">T</text>
<text x="1859.89" y="762.50" font-size="19.5" fill="#111" textLength="57.70" lengthAdjust="spacingAndGlyphs">OBUFT</text>
<text x="1813.46" y="680.50" font-size="19.5" fill="#111" textLength="151.57" lengthAdjust="spacingAndGlyphs">y<tspan dy="-1.2">_</tspan><tspan dy="1.2">v</tspan><tspan dy="-1.2">_</tspan><tspan dy="1.2">OBUFT[0]</tspan><tspan dy="-1.2">_</tspan><tspan dy="1.2">inst</tspan></text>
<rect x="1755.50" y="850.00" width="80.50" height="1" fill="#1cb800"/>
<rect x="1836.00" y="823.00" width="13.00" height="1" fill="#000"/>
<rect x="1836.00" y="850.00" width="13.00" height="1" fill="#000"/>
<rect x="1849.5" y="809.50" width="80" height="54" fill="#ffffcc" stroke="#000" stroke-width="1"/>
<rect x="1930.00" y="823.00" width="13.00" height="1" fill="#000"/>
<rect x="1943.00" y="823.00" width="69.50" height="1" fill="#1cb800"/>
<polygon points="2024.50,817.70 2012.00,823.50 2024.50,829.30" fill="#000" stroke="none" stroke-width="1"/>
<text x="2001.92" y="817.30" font-size="13" fill="#222" textLength="8.64" lengthAdjust="spacingAndGlyphs">1</text>
<text x="1859.12" y="828.50" font-size="16" fill="#222" textLength="5.66" lengthAdjust="spacingAndGlyphs">I</text>
<text x="1906.74" y="828.50" font-size="16" fill="#222" textLength="12.42" lengthAdjust="spacingAndGlyphs">O</text>
<text x="1859.69" y="855.70" font-size="16" fill="#222" textLength="8.43" lengthAdjust="spacingAndGlyphs">T</text>
<text x="1859.89" y="882.50" font-size="19.5" fill="#111" textLength="57.70" lengthAdjust="spacingAndGlyphs">OBUFT</text>
<text x="1813.46" y="800.50" font-size="19.5" fill="#111" textLength="151.57" lengthAdjust="spacingAndGlyphs">y<tspan dy="-1.2">_</tspan><tspan dy="1.2">v</tspan><tspan dy="-1.2">_</tspan><tspan dy="1.2">OBUFT[1]</tspan><tspan dy="-1.2">_</tspan><tspan dy="1.2">inst</tspan></text>
<rect x="1753.00" y="848.00" width="5" height="5" fill="#1cb800"/>
<rect x="1755.50" y="970.00" width="80.50" height="1" fill="#1cb800"/>
<rect x="1836.00" y="943.00" width="13.00" height="1" fill="#000"/>
<rect x="1836.00" y="970.00" width="13.00" height="1" fill="#000"/>
<rect x="1849.5" y="930.50" width="80" height="54" fill="#ffffcc" stroke="#000" stroke-width="1"/>
<rect x="1930.00" y="943.00" width="13.00" height="1" fill="#000"/>
<rect x="1943.00" y="943.00" width="69.50" height="1" fill="#1cb800"/>
<polygon points="2024.50,937.70 2012.00,943.50 2024.50,949.30" fill="#000" stroke="none" stroke-width="1"/>
<text x="2002.36" y="937.30" font-size="13" fill="#222" textLength="8.18" lengthAdjust="spacingAndGlyphs">2</text>
<text x="1859.12" y="948.50" font-size="16" fill="#222" textLength="5.66" lengthAdjust="spacingAndGlyphs">I</text>
<text x="1906.74" y="948.50" font-size="16" fill="#222" textLength="12.42" lengthAdjust="spacingAndGlyphs">O</text>
<text x="1859.69" y="975.70" font-size="16" fill="#222" textLength="8.43" lengthAdjust="spacingAndGlyphs">T</text>
<text x="1859.89" y="1003.50" font-size="19.5" fill="#111" textLength="57.70" lengthAdjust="spacingAndGlyphs">OBUFT</text>
<text x="1813.46" y="921.50" font-size="19.5" fill="#111" textLength="151.57" lengthAdjust="spacingAndGlyphs">y<tspan dy="-1.2">_</tspan><tspan dy="1.2">v</tspan><tspan dy="-1.2">_</tspan><tspan dy="1.2">OBUFT[2]</tspan><tspan dy="-1.2">_</tspan><tspan dy="1.2">inst</tspan></text>
<rect x="1753.00" y="968.00" width="5" height="5" fill="#1cb800"/>
<rect x="1755.50" y="1090.00" width="80.50" height="1" fill="#1cb800"/>
<rect x="1836.00" y="1064.00" width="13.00" height="1" fill="#000"/>
<rect x="1836.00" y="1090.00" width="13.00" height="1" fill="#000"/>
<rect x="1849.5" y="1050.50" width="80" height="54" fill="#ffffcc" stroke="#000" stroke-width="1"/>
<rect x="1930.00" y="1064.00" width="13.00" height="1" fill="#000"/>
<rect x="1943.00" y="1064.00" width="69.50" height="1" fill="#1cb800"/>
<polygon points="2024.50,1058.70 2012.00,1064.50 2024.50,1070.30" fill="#000" stroke="none" stroke-width="1"/>
<text x="2002.56" y="1058.30" font-size="13" fill="#222" textLength="7.86" lengthAdjust="spacingAndGlyphs">3</text>
<text x="1859.12" y="1069.50" font-size="16" fill="#222" textLength="5.66" lengthAdjust="spacingAndGlyphs">I</text>
<text x="1906.74" y="1069.50" font-size="16" fill="#222" textLength="12.42" lengthAdjust="spacingAndGlyphs">O</text>
<text x="1859.69" y="1095.70" font-size="16" fill="#222" textLength="8.43" lengthAdjust="spacingAndGlyphs">T</text>
<text x="1859.89" y="1123.50" font-size="19.5" fill="#111" textLength="57.70" lengthAdjust="spacingAndGlyphs">OBUFT</text>
<text x="1813.46" y="1041.50" font-size="19.5" fill="#111" textLength="151.57" lengthAdjust="spacingAndGlyphs">y<tspan dy="-1.2">_</tspan><tspan dy="1.2">v</tspan><tspan dy="-1.2">_</tspan><tspan dy="1.2">OBUFT[3]</tspan><tspan dy="-1.2">_</tspan><tspan dy="1.2">inst</tspan></text>
<rect x="1753.00" y="1088.00" width="5" height="5" fill="#1cb800"/>
<polyline points="1608,1131.50 1755.5,1131.50 1755.5,729.50" fill="none" stroke="#1cb800" stroke-width="1"/>
<polyline points="1125.5,1122.50 1144.5,1122.50 1153,1131.50 1144.5,1140.50 1125.5,1140.50 1125.5,1122.50" fill="#fff" stroke="#000" stroke-width="1" stroke-linejoin="miter"/>
<rect x="1153.00" y="1131.00" width="41.00" height="1" fill="#1cb800"/>
<rect x="1194.00" y="1131.00" width="13.00" height="1" fill="#000"/>
<polygon points="1207.50,1115.40 1246.80,1131.50 1207.50,1147.60" fill="#ffffcc" stroke="#000" stroke-width="1.1" stroke-linejoin="miter"/>
<rect x="1247.00" y="1131.00" width="13.00" height="1" fill="#000"/>
<rect x="1260.00" y="1131.00" width="242.00" height="1" fill="#1cb800"/>
<rect x="1502.00" y="1131.00" width="12.00" height="1" fill="#000"/>
<rect x="1514.5" y="1117.50" width="80" height="27" fill="#ffffcc" stroke="#000" stroke-width="1"/>
<rect x="1595.00" y="1131.00" width="13.00" height="1" fill="#000"/>
<text x="1191.62" y="1126.20" font-size="16" fill="#222" textLength="4.77" lengthAdjust="spacingAndGlyphs">I</text>
<text x="1257.24" y="1126.20" font-size="16" fill="#222" textLength="12.53" lengthAdjust="spacingAndGlyphs">O</text>
<text x="1219.44" y="1167.00" font-size="19.5" fill="#111" textLength="38.54" lengthAdjust="spacingAndGlyphs">IBUF</text>
<text x="1219.67" y="1107.40" font-size="19.5" fill="#111" textLength="121.95" lengthAdjust="spacingAndGlyphs">en<tspan dy="-1.2">_</tspan><tspan dy="1.2">v</tspan><tspan dy="-1.2">_</tspan><tspan dy="1.2">IBUF</tspan><tspan dy="-1.2">_</tspan><tspan dy="1.2">inst</tspan></text>
<text x="1524.22" y="1136.30" font-size="16" fill="#222" textLength="13.41" lengthAdjust="spacingAndGlyphs">I0</text>
<text x="1571.95" y="1136.30" font-size="16" fill="#222" textLength="12.31" lengthAdjust="spacingAndGlyphs">O</text>
<text x="1533.03" y="1162.90" font-size="19.5" fill="#111" textLength="40.78" lengthAdjust="spacingAndGlyphs">LUT1</text>
<text x="1461.96" y="1108.90" font-size="19.5" fill="#111" textLength="184.09" lengthAdjust="spacingAndGlyphs">y<tspan dy="-1.2">_</tspan><tspan dy="1.2">v</tspan><tspan dy="-1.2">_</tspan><tspan dy="1.2">OBUFT[3]</tspan><tspan dy="-1.2">_</tspan><tspan dy="1.2">inst</tspan><tspan dy="-1.2">_</tspan><tspan dy="1.2">i</tspan><tspan dy="-1.2">_</tspan><tspan dy="1.2">1</tspan></text>
<text x="1046.05" y="709.30" font-size="19.5" fill="#111" textLength="63.22" lengthAdjust="spacingAndGlyphs">a<tspan dy="-1.2">_</tspan><tspan dy="1.2">v[3:0]</tspan></text>
<text x="1071.76" y="1138.00" font-size="19.5" fill="#111" textLength="38.00" lengthAdjust="spacingAndGlyphs">en<tspan dy="-1.2">_</tspan><tspan dy="1.2">v</tspan></text>
<text x="2092.96" y="709.10" font-size="19.5" fill="#111" textLength="62.41" lengthAdjust="spacingAndGlyphs">y<tspan dy="-1.2">_</tspan><tspan dy="1.2">v[3:0]</tspan></text>
<polyline points="1125.5,1215.50 1144.5,1215.50 1152,1224.50 1144.5,1233.50 1125.5,1233.50 1125.5,1215.50" fill="#fff" stroke="#000" stroke-width="3" stroke-linejoin="miter"/>
<rect x="1153" y="1223.00" width="255" height="3" fill="#008000"/>
<rect x="1406" y="1223.00" width="3" height="342.00" fill="#008000"/>
<polyline points="2050.5,1215.50 2069.5,1215.50 2078,1224.50 2069.5,1233.50 2050.5,1233.50 2050.5,1215.50" fill="#fff" stroke="#000" stroke-width="3" stroke-linejoin="miter"/>
<rect x="2022" y="1223.00" width="27" height="3" fill="#008000"/>
<rect x="2022" y="1220.00" width="3" height="372.00" fill="#008000"/>
<polygon points="1406.00,1218.50 1419.50,1224.50 1406.00,1230.50" fill="#000" stroke="none" stroke-width="1"/>
<rect x="1419.00" y="1224.00" width="83.00" height="1" fill="#1cb800"/>
<rect x="1502.00" y="1224.00" width="12.00" height="1" fill="#000"/>
<polygon points="1514.50,1208.40 1553.50,1224.50 1514.50,1240.60" fill="#ffffcc" stroke="#000" stroke-width="1.1" stroke-linejoin="miter"/>
<rect x="1554.00" y="1224.00" width="14.00" height="1" fill="#000"/>
<text x="1420.63" y="1218.30" font-size="13" fill="#222" textLength="8.14" lengthAdjust="spacingAndGlyphs">0</text>
<text x="1499.02" y="1219.10" font-size="16" fill="#222" textLength="4.77" lengthAdjust="spacingAndGlyphs">I</text>
<text x="1564.74" y="1219.10" font-size="16" fill="#222" textLength="12.53" lengthAdjust="spacingAndGlyphs">O</text>
<text x="1526.85" y="1200.10" font-size="19.5" fill="#111" textLength="155.18" lengthAdjust="spacingAndGlyphs">a<tspan dy="-1.2">_</tspan><tspan dy="1.2">vhd</tspan><tspan dy="-1.2">_</tspan><tspan dy="1.2">IBUF[0]</tspan><tspan dy="-1.2">_</tspan><tspan dy="1.2">inst</tspan></text>
<text x="1526.43" y="1260.30" font-size="19.5" fill="#111" textLength="38.75" lengthAdjust="spacingAndGlyphs">IBUF</text>
<polygon points="1406.00,1339.50 1419.50,1345.50 1406.00,1351.50" fill="#000" stroke="none" stroke-width="1"/>
<rect x="1419.00" y="1345.00" width="83.00" height="1" fill="#1cb800"/>
<rect x="1502.00" y="1345.00" width="12.00" height="1" fill="#000"/>
<polygon points="1514.50,1329.40 1553.50,1345.50 1514.50,1361.60" fill="#ffffcc" stroke="#000" stroke-width="1.1" stroke-linejoin="miter"/>
<rect x="1554.00" y="1345.00" width="14.00" height="1" fill="#000"/>
<text x="1419.96" y="1339.30" font-size="13" fill="#222" textLength="9.03" lengthAdjust="spacingAndGlyphs">1</text>
<text x="1499.02" y="1340.10" font-size="16" fill="#222" textLength="4.77" lengthAdjust="spacingAndGlyphs">I</text>
<text x="1564.74" y="1340.10" font-size="16" fill="#222" textLength="12.53" lengthAdjust="spacingAndGlyphs">O</text>
<text x="1526.85" y="1321.10" font-size="19.5" fill="#111" textLength="155.18" lengthAdjust="spacingAndGlyphs">a<tspan dy="-1.2">_</tspan><tspan dy="1.2">vhd</tspan><tspan dy="-1.2">_</tspan><tspan dy="1.2">IBUF[1]</tspan><tspan dy="-1.2">_</tspan><tspan dy="1.2">inst</tspan></text>
<text x="1526.43" y="1381.30" font-size="19.5" fill="#111" textLength="38.75" lengthAdjust="spacingAndGlyphs">IBUF</text>
<polygon points="1406.00,1459.50 1419.50,1465.50 1406.00,1471.50" fill="#000" stroke="none" stroke-width="1"/>
<rect x="1419.00" y="1465.00" width="83.00" height="1" fill="#1cb800"/>
<rect x="1502.00" y="1465.00" width="12.00" height="1" fill="#000"/>
<polygon points="1514.50,1449.40 1553.50,1465.50 1514.50,1481.60" fill="#ffffcc" stroke="#000" stroke-width="1.1" stroke-linejoin="miter"/>
<rect x="1554.00" y="1465.00" width="14.00" height="1" fill="#000"/>
<text x="1420.43" y="1459.30" font-size="13" fill="#222" textLength="8.55" lengthAdjust="spacingAndGlyphs">2</text>
<text x="1499.02" y="1460.10" font-size="16" fill="#222" textLength="4.77" lengthAdjust="spacingAndGlyphs">I</text>
<text x="1564.74" y="1460.10" font-size="16" fill="#222" textLength="12.53" lengthAdjust="spacingAndGlyphs">O</text>
<text x="1526.85" y="1441.10" font-size="19.5" fill="#111" textLength="155.18" lengthAdjust="spacingAndGlyphs">a<tspan dy="-1.2">_</tspan><tspan dy="1.2">vhd</tspan><tspan dy="-1.2">_</tspan><tspan dy="1.2">IBUF[2]</tspan><tspan dy="-1.2">_</tspan><tspan dy="1.2">inst</tspan></text>
<text x="1526.43" y="1501.30" font-size="19.5" fill="#111" textLength="38.75" lengthAdjust="spacingAndGlyphs">IBUF</text>
<polygon points="1406.00,1553.50 1419.50,1559.50 1406.00,1565.50" fill="#000" stroke="none" stroke-width="1"/>
<rect x="1419.00" y="1559.00" width="83.00" height="1" fill="#1cb800"/>
<rect x="1502.00" y="1559.00" width="12.00" height="1" fill="#000"/>
<polygon points="1514.50,1543.40 1553.50,1559.50 1514.50,1575.60" fill="#ffffcc" stroke="#000" stroke-width="1.1" stroke-linejoin="miter"/>
<rect x="1554.00" y="1559.00" width="14.00" height="1" fill="#000"/>
<text x="1420.64" y="1553.30" font-size="13" fill="#222" textLength="8.21" lengthAdjust="spacingAndGlyphs">3</text>
<text x="1499.02" y="1554.10" font-size="16" fill="#222" textLength="4.77" lengthAdjust="spacingAndGlyphs">I</text>
<text x="1564.74" y="1554.10" font-size="16" fill="#222" textLength="12.53" lengthAdjust="spacingAndGlyphs">O</text>
<text x="1526.85" y="1535.10" font-size="19.5" fill="#111" textLength="155.18" lengthAdjust="spacingAndGlyphs">a<tspan dy="-1.2">_</tspan><tspan dy="1.2">vhd</tspan><tspan dy="-1.2">_</tspan><tspan dy="1.2">IBUF[3]</tspan><tspan dy="-1.2">_</tspan><tspan dy="1.2">inst</tspan></text>
<text x="1526.43" y="1595.30" font-size="19.5" fill="#111" textLength="38.75" lengthAdjust="spacingAndGlyphs">IBUF</text>
<rect x="1568.00" y="1224.00" width="268.00" height="1" fill="#1cb800"/>
<rect x="1568.00" y="1345.00" width="268.00" height="1" fill="#1cb800"/>
<rect x="1568.00" y="1465.00" width="268.00" height="1" fill="#1cb800"/>
<polyline points="1568,1559.50 1728.5,1559.50 1728.5,1586.50 1836,1586.50" fill="none" stroke="#1cb800" stroke-width="1"/>
<rect x="1755.50" y="1251.00" width="80.50" height="1" fill="#1cb800"/>
<rect x="1836.00" y="1224.00" width="13.00" height="1" fill="#000"/>
<rect x="1836.00" y="1251.00" width="13.00" height="1" fill="#000"/>
<rect x="1849.5" y="1211.50" width="80" height="54" fill="#ffffcc" stroke="#000" stroke-width="1"/>
<rect x="1930.00" y="1224.00" width="13.00" height="1" fill="#000"/>
<rect x="1943.00" y="1224.00" width="69.50" height="1" fill="#1cb800"/>
<polygon points="2024.50,1218.70 2012.00,1224.50 2024.50,1230.30" fill="#000" stroke="none" stroke-width="1"/>
<text x="2002.55" y="1218.30" font-size="13" fill="#222" textLength="7.79" lengthAdjust="spacingAndGlyphs">0</text>
<text x="1859.12" y="1229.50" font-size="16" fill="#222" textLength="5.66" lengthAdjust="spacingAndGlyphs">I</text>
<text x="1906.74" y="1229.50" font-size="16" fill="#222" textLength="12.42" lengthAdjust="spacingAndGlyphs">O</text>
<text x="1859.69" y="1256.70" font-size="16" fill="#222" textLength="8.43" lengthAdjust="spacingAndGlyphs">T</text>
<text x="1859.89" y="1284.50" font-size="19.5" fill="#111" textLength="57.70" lengthAdjust="spacingAndGlyphs">OBUFT</text>
<text x="1802.16" y="1202.50" font-size="19.5" fill="#111" textLength="173.87" lengthAdjust="spacingAndGlyphs">y<tspan dy="-1.2">_</tspan><tspan dy="1.2">vhd</tspan><tspan dy="-1.2">_</tspan><tspan dy="1.2">OBUFT[0]</tspan><tspan dy="-1.2">_</tspan><tspan dy="1.2">inst</tspan></text>
<rect x="1755.50" y="1371.00" width="80.50" height="1" fill="#1cb800"/>
<rect x="1836.00" y="1345.00" width="13.00" height="1" fill="#000"/>
<rect x="1836.00" y="1371.00" width="13.00" height="1" fill="#000"/>
<rect x="1849.5" y="1331.50" width="80" height="54" fill="#ffffcc" stroke="#000" stroke-width="1"/>
<rect x="1930.00" y="1345.00" width="13.00" height="1" fill="#000"/>
<rect x="1943.00" y="1345.00" width="69.50" height="1" fill="#1cb800"/>
<polygon points="2024.50,1339.70 2012.00,1345.50 2024.50,1351.30" fill="#000" stroke="none" stroke-width="1"/>
<text x="2001.92" y="1339.30" font-size="13" fill="#222" textLength="8.64" lengthAdjust="spacingAndGlyphs">1</text>
<text x="1859.12" y="1350.50" font-size="16" fill="#222" textLength="5.66" lengthAdjust="spacingAndGlyphs">I</text>
<text x="1906.74" y="1350.50" font-size="16" fill="#222" textLength="12.42" lengthAdjust="spacingAndGlyphs">O</text>
<text x="1859.69" y="1376.70" font-size="16" fill="#222" textLength="8.43" lengthAdjust="spacingAndGlyphs">T</text>
<text x="1859.89" y="1404.50" font-size="19.5" fill="#111" textLength="57.70" lengthAdjust="spacingAndGlyphs">OBUFT</text>
<text x="1802.16" y="1322.50" font-size="19.5" fill="#111" textLength="173.87" lengthAdjust="spacingAndGlyphs">y<tspan dy="-1.2">_</tspan><tspan dy="1.2">vhd</tspan><tspan dy="-1.2">_</tspan><tspan dy="1.2">OBUFT[1]</tspan><tspan dy="-1.2">_</tspan><tspan dy="1.2">inst</tspan></text>
<rect x="1753.00" y="1369.00" width="5" height="5" fill="#1cb800"/>
<rect x="1755.50" y="1492.00" width="80.50" height="1" fill="#1cb800"/>
<rect x="1836.00" y="1465.00" width="13.00" height="1" fill="#000"/>
<rect x="1836.00" y="1492.00" width="13.00" height="1" fill="#000"/>
<rect x="1849.5" y="1452.50" width="80" height="54" fill="#ffffcc" stroke="#000" stroke-width="1"/>
<rect x="1930.00" y="1465.00" width="13.00" height="1" fill="#000"/>
<rect x="1943.00" y="1465.00" width="69.50" height="1" fill="#1cb800"/>
<polygon points="2024.50,1459.70 2012.00,1465.50 2024.50,1471.30" fill="#000" stroke="none" stroke-width="1"/>
<text x="2002.36" y="1459.30" font-size="13" fill="#222" textLength="8.18" lengthAdjust="spacingAndGlyphs">2</text>
<text x="1859.12" y="1470.50" font-size="16" fill="#222" textLength="5.66" lengthAdjust="spacingAndGlyphs">I</text>
<text x="1906.74" y="1470.50" font-size="16" fill="#222" textLength="12.42" lengthAdjust="spacingAndGlyphs">O</text>
<text x="1859.69" y="1497.70" font-size="16" fill="#222" textLength="8.43" lengthAdjust="spacingAndGlyphs">T</text>
<text x="1859.89" y="1525.50" font-size="19.5" fill="#111" textLength="57.70" lengthAdjust="spacingAndGlyphs">OBUFT</text>
<text x="1802.16" y="1443.50" font-size="19.5" fill="#111" textLength="173.87" lengthAdjust="spacingAndGlyphs">y<tspan dy="-1.2">_</tspan><tspan dy="1.2">vhd</tspan><tspan dy="-1.2">_</tspan><tspan dy="1.2">OBUFT[2]</tspan><tspan dy="-1.2">_</tspan><tspan dy="1.2">inst</tspan></text>
<rect x="1753.00" y="1490.00" width="5" height="5" fill="#1cb800"/>
<rect x="1755.50" y="1612.00" width="80.50" height="1" fill="#1cb800"/>
<rect x="1836.00" y="1586.00" width="13.00" height="1" fill="#000"/>
<rect x="1836.00" y="1612.00" width="13.00" height="1" fill="#000"/>
<rect x="1849.5" y="1572.50" width="80" height="54" fill="#ffffcc" stroke="#000" stroke-width="1"/>
<rect x="1930.00" y="1586.00" width="13.00" height="1" fill="#000"/>
<rect x="1943.00" y="1586.00" width="69.50" height="1" fill="#1cb800"/>
<polygon points="2024.50,1580.70 2012.00,1586.50 2024.50,1592.30" fill="#000" stroke="none" stroke-width="1"/>
<text x="2002.56" y="1580.30" font-size="13" fill="#222" textLength="7.86" lengthAdjust="spacingAndGlyphs">3</text>
<text x="1859.12" y="1591.50" font-size="16" fill="#222" textLength="5.66" lengthAdjust="spacingAndGlyphs">I</text>
<text x="1906.74" y="1591.50" font-size="16" fill="#222" textLength="12.42" lengthAdjust="spacingAndGlyphs">O</text>
<text x="1859.69" y="1617.70" font-size="16" fill="#222" textLength="8.43" lengthAdjust="spacingAndGlyphs">T</text>
<text x="1859.89" y="1645.50" font-size="19.5" fill="#111" textLength="57.70" lengthAdjust="spacingAndGlyphs">OBUFT</text>
<text x="1802.16" y="1563.50" font-size="19.5" fill="#111" textLength="173.87" lengthAdjust="spacingAndGlyphs">y<tspan dy="-1.2">_</tspan><tspan dy="1.2">vhd</tspan><tspan dy="-1.2">_</tspan><tspan dy="1.2">OBUFT[3]</tspan><tspan dy="-1.2">_</tspan><tspan dy="1.2">inst</tspan></text>
<rect x="1753.00" y="1610.00" width="5" height="5" fill="#1cb800"/>
<polyline points="1608,1652.50 1755.5,1652.50 1755.5,1251.50" fill="none" stroke="#1cb800" stroke-width="1"/>
<polyline points="1125.5,1643.50 1144.5,1643.50 1153,1652.50 1144.5,1661.50 1125.5,1661.50 1125.5,1643.50" fill="#fff" stroke="#000" stroke-width="1" stroke-linejoin="miter"/>
<rect x="1153.00" y="1652.00" width="41.00" height="1" fill="#1cb800"/>
<rect x="1194.00" y="1652.00" width="13.00" height="1" fill="#000"/>
<polygon points="1207.50,1636.40 1246.80,1652.50 1207.50,1668.60" fill="#ffffcc" stroke="#000" stroke-width="1.1" stroke-linejoin="miter"/>
<rect x="1247.00" y="1652.00" width="13.00" height="1" fill="#000"/>
<rect x="1260.00" y="1652.00" width="242.00" height="1" fill="#1cb800"/>
<rect x="1502.00" y="1652.00" width="12.00" height="1" fill="#000"/>
<rect x="1514.5" y="1639.50" width="80" height="27" fill="#ffffcc" stroke="#000" stroke-width="1"/>
<rect x="1595.00" y="1652.00" width="13.00" height="1" fill="#000"/>
<text x="1191.62" y="1647.20" font-size="16" fill="#222" textLength="4.77" lengthAdjust="spacingAndGlyphs">I</text>
<text x="1257.24" y="1647.20" font-size="16" fill="#222" textLength="12.53" lengthAdjust="spacingAndGlyphs">O</text>
<text x="1219.44" y="1688.00" font-size="19.5" fill="#111" textLength="38.54" lengthAdjust="spacingAndGlyphs">IBUF</text>
<text x="1219.85" y="1628.40" font-size="19.5" fill="#111" textLength="145.28" lengthAdjust="spacingAndGlyphs">en<tspan dy="-1.2">_</tspan><tspan dy="1.2">vhd</tspan><tspan dy="-1.2">_</tspan><tspan dy="1.2">IBUF</tspan><tspan dy="-1.2">_</tspan><tspan dy="1.2">inst</tspan></text>
<text x="1524.22" y="1657.30" font-size="16" fill="#222" textLength="13.41" lengthAdjust="spacingAndGlyphs">I0</text>
<text x="1571.95" y="1657.30" font-size="16" fill="#222" textLength="12.31" lengthAdjust="spacingAndGlyphs">O</text>
<text x="1533.03" y="1683.90" font-size="19.5" fill="#111" textLength="40.78" lengthAdjust="spacingAndGlyphs">LUT1</text>
<text x="1451.16" y="1629.90" font-size="19.5" fill="#111" textLength="205.80" lengthAdjust="spacingAndGlyphs">y<tspan dy="-1.2">_</tspan><tspan dy="1.2">vhd</tspan><tspan dy="-1.2">_</tspan><tspan dy="1.2">OBUFT[3]</tspan><tspan dy="-1.2">_</tspan><tspan dy="1.2">inst</tspan><tspan dy="-1.2">_</tspan><tspan dy="1.2">i</tspan><tspan dy="-1.2">_</tspan><tspan dy="1.2">1</tspan></text>
<text x="1023.92" y="1231.30" font-size="19.5" fill="#111" textLength="85.38" lengthAdjust="spacingAndGlyphs">a<tspan dy="-1.2">_</tspan><tspan dy="1.2">vhd[3:0]</tspan></text>
<text x="1049.61" y="1659.00" font-size="19.5" fill="#111" textLength="60.68" lengthAdjust="spacingAndGlyphs">en<tspan dy="-1.2">_</tspan><tspan dy="1.2">vhd</tspan></text>
<text x="2092.96" y="1231.10" font-size="19.5" fill="#111" textLength="84.25" lengthAdjust="spacingAndGlyphs">y<tspan dy="-1.2">_</tspan><tspan dy="1.2">vhd[3:0]</tspan></text>
</svg></body></html>
